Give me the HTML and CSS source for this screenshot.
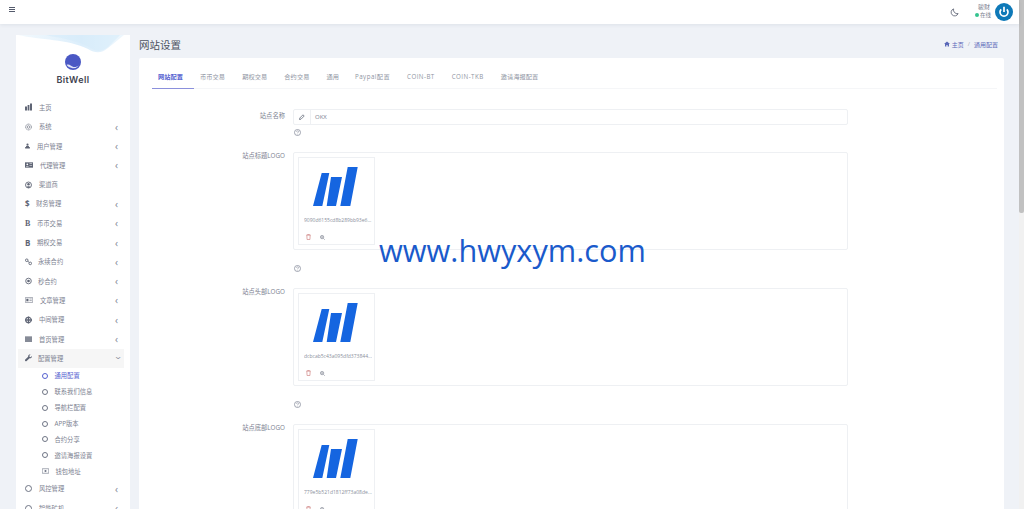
FILE: index.html
```html
<!DOCTYPE html>
<html lang="zh-CN">
<head>
    <meta charset="UTF-8">
    <title>网站设置</title>
    <link rel="stylesheet" href="styles.css">
</head>
<body>
    <svg class="defs" width="0" height="0">
        <defs>
            <linearGradient id="wave-a" x1="0" y1="0" x2="1" y2="0">
                <stop offset="0" stop-color="#f3f9fd"/>
                <stop offset=".6" stop-color="#dceefb"/>
                <stop offset="1" stop-color="#eef7fd"/>
            </linearGradient>
        </defs>
        <symbol id="i-chart" viewBox="0 0 7 7"><path d="M0 3h2v4H0zM2.6 1.500h1.800V7H2.600zM5 0h2v7H5z"/></symbol>
        <symbol id="i-gear" viewBox="0 0 8 8"><circle cx="4" cy="4" r="3.300" fill="none" stroke="currentColor" stroke-width=".8" stroke-dasharray="1.600 .5"/><circle cx="4" cy="4" r="1.500" fill="none" stroke="currentColor" stroke-width=".7"/></symbol>
        <symbol id="i-user" viewBox="0 0 7 7"><circle cx="3.500" cy="1.600" r="1.500"/><path d="M1.500 3.600h4v1.200h1.300V7H.2V4.800h1.300z"/></symbol>
        <symbol id="i-card" viewBox="0 0 9 6"><path d="M0 0h9v6H0z"/><circle cx="2.600" cy="2.200" r="1" fill="#fff"/><path d="M1.200 4.600h2.800V4H1.200zM5 1.400h3V2H5zM5 3h3v.6H5z" fill="#fff"/></symbol>
        <symbol id="i-account" viewBox="0 0 8 8"><circle cx="4" cy="4" r="3.400" fill="none" stroke="currentColor" stroke-width="1"/><circle cx="4" cy="3.100" r="1.400"/><path d="M1.800 6.200c.6-1.200 3.800-1.200 4.400 0L4 7.400z"/></symbol>
        <symbol id="i-link" viewBox="0 0 8 8"><circle cx="2" cy="2" r="1.500" fill="none" stroke="currentColor"/><circle cx="6" cy="5.600" r="1.500" fill="none" stroke="currentColor"/><path d="M3 3l2 1.600" stroke="currentColor"/></symbol>
        <symbol id="i-target" viewBox="0 0 8 8"><circle cx="4" cy="4" r="3.200" fill="none" stroke="currentColor"/><circle cx="4" cy="4" r="1.500"/></symbol>
        <symbol id="i-news" viewBox="0 0 9 6"><path d="M.3.3h8.400v5.400H.3z" fill="none" stroke="currentColor" stroke-width=".6"/><path d="M1.500 1.500h2.400v3H1.500zM5 1.500h2.600v.7H5zM5 3h2.600v.7H5z"/></symbol>
        <symbol id="i-buoy" viewBox="0 0 8 8"><circle cx="4" cy="4" r="3.200" fill="none" stroke="currentColor" stroke-width="1.200"/><path d="M3.200 0h1.600v8H3.200zM0 3.200h8v1.600H0z"/></symbol>
        <symbol id="i-rows" viewBox="0 0 8 6"><path d="M0 0h8v1.500H0zM0 2.250h8v1.500H0zM0 4.500h8V6H0z"/></symbol>
        <symbol id="i-wrench" viewBox="0 0 8 8"><path d="M7.800 1.600 6.400 3l-1.200-.3L4.900 1.500 6.300.2C5-.2 3.400.7 3.600 2.500L.3 5.800c-.5.5-.4 1.200 0 1.600.5.5 1.200.4 1.600 0L5.200 4.200c1.900.3 3-1.200 2.600-2.600z"/></symbol>
        <symbol id="i-wallet" viewBox="0 0 8 6"><path d="M.3.4h7.400v5.200H.3z" fill="none" stroke="currentColor" stroke-width=".7"/><circle cx="4" cy="3" r="1.200"/></symbol>
        <symbol id="i-help" viewBox="0 0 6 6"><circle cx="3" cy="3" r="2.600" fill="none" stroke="currentColor" stroke-width=".6"/><path d="M2.100 2.300c.1-1 1.800-1 1.800 0 0 .7-.9.6-.9 1.300M3 4.200v.5" fill="none" stroke="currentColor" stroke-width=".5"/></symbol>
        <symbol id="i-trash" viewBox="0 0 6 7"><path d="M.3 1.300h5.400M2 1.200V.4h2v.8M1 1.500l.3 5h3.400l.3-5" fill="none" stroke="currentColor" stroke-width=".7"/></symbol>
        <symbol id="i-zoom" viewBox="0 0 6 6"><circle cx="2.500" cy="2.500" r="2" fill="none" stroke="currentColor" stroke-width=".7"/><path d="M4 4l1.800 1.800M1.500 2.500h2M2.500 1.500v2" fill="none" stroke="currentColor" stroke-width=".6"/></symbol>
        <symbol id="i-logo" viewBox="0 0 45 39"><path d="M0 39h9.300L16.300 6H8.700zM13.700 39H23L29 10H18zM27.300 39h10L44.700 0h-10z"/></symbol>
    </svg>

    <div class="viewport">
        <header class="topbar">
            <div class="burger"><span></span><span></span><span></span></div>
            <div class="topbar-right">
                <svg class="moon" viewBox="0 0 10 10"><path d="M4 1a4 4 0 1 0 5 5.200A4.200 4.200 0 0 1 4 1z" fill="none" stroke="currentColor" stroke-width=".9"/></svg>
                <div class="user-info">
                    <div class="user-name">骏财</div>
                    <div class="user-status"><i class="dot"></i>在线</div>
                </div>
                <svg class="avatar" viewBox="0 0 18 18">
                    <circle cx="9" cy="9" r="9" fill="#0e79b8"/>
                    <path d="M6.200 6.300a4 4 0 1 0 5.600 0" fill="none" stroke="#fff" stroke-width="1.700"/>
                    <path d="M9 3.800v5.200" stroke="#fff" stroke-width="1.700"/>
                </svg>
            </div>
        </header>

        <div class="layout">
            <aside class="sidebar">
                <div class="brand">
                    <svg class="brand-wave" viewBox="0 0 114 18" preserveAspectRatio="none">
                        <path d="M2 0h106L92 13c-6 5-12 6-20 1C52 4 24 5 2 0z" fill="url(#wave-a)"/>
                        <path d="M30 0c18 4 32 5 46 14 6 3 11 2 16-2L104 0z" fill="#d6ebfa" opacity=".55"/>
                    </svg>
                    <svg class="brand-logo" viewBox="0 0 16 16">
                        <circle cx="8" cy="8" r="8" fill="#4a58c4"/>
                        <path d="M1.500 11c3-1.500 4 1.500 7 2 2 .3 4-.5 5.500-1.500A8 8 0 0 1 1.500 11z" fill="#dfe3f7"/>
                    </svg>
                    <div class="brand-name">BitWell</div>
                </div>
                <nav class="nav">
                    <a class="nav-link"><svg class="ico w7"><use href="#i-chart"/></svg>主页</a>
                    <a class="nav-link"><svg class="ico w7"><use href="#i-gear"/></svg>系统<span class="chev">‹</span></a>
                    <a class="nav-link"><svg class="ico w5"><use href="#i-user"/></svg>用户管理<span class="chev">‹</span></a>
                    <a class="nav-link"><svg class="ico w8"><use href="#i-card"/></svg>代理管理<span class="chev">‹</span></a>
                    <a class="nav-link"><svg class="ico w7"><use href="#i-account"/></svg>渠道商</a>
                    <a class="nav-link"><span class="ico-text w4">$</span>财务管理<span class="chev">‹</span></a>
                    <a class="nav-link"><span class="ico-text w5 serif">B</span>币币交易<span class="chev">‹</span></a>
                    <a class="nav-link"><span class="ico-text w5">B</span>期权交易<span class="chev">‹</span></a>
                    <a class="nav-link"><svg class="ico w7 tight"><use href="#i-link"/></svg>永续合约<span class="chev">‹</span></a>
                    <a class="nav-link"><svg class="ico w7 tight"><use href="#i-target"/></svg>秒合约<span class="chev">‹</span></a>
                    <a class="nav-link"><svg class="ico w8"><use href="#i-news"/></svg>文章管理<span class="chev">‹</span></a>
                    <a class="nav-link"><svg class="ico w7"><use href="#i-buoy"/></svg>中间管理<span class="chev">‹</span></a>
                    <a class="nav-link"><svg class="ico w7"><use href="#i-rows"/></svg>首页管理<span class="chev">‹</span></a>
                    <a class="nav-link open"><svg class="ico w7 tight"><use href="#i-wrench"/></svg>配置管理<span class="chev down">‹</span></a>
                    <div class="sub">
                        <a class="sub-link active"><i class="ring"></i>通用配置</a>
                        <a class="sub-link"><i class="ring"></i>联系我们信息</a>
                        <a class="sub-link"><i class="ring"></i>导航栏配置</a>
                        <a class="sub-link"><i class="ring"></i>APP版本</a>
                        <a class="sub-link"><i class="ring"></i>合约分享</a>
                        <a class="sub-link"><i class="ring"></i>邀请海报设置</a>
                        <a class="sub-link"><svg class="ring-ico"><use href="#i-wallet"/></svg>钱包地址</a>
                    </div>
                    <a class="nav-link"><i class="ring big"></i>风控管理<span class="chev">‹</span></a>
                    <a class="nav-link"><i class="ring big"></i>智能矿机<span class="chev">‹</span></a>
                </nav>
            </aside>

            <main class="content">
                <div class="page-head">
                    <h1>网站设置</h1>
                    <div class="crumbs">
                        <svg class="home" viewBox="0 0 6 6"><path d="M3 .4 0 3h1v2.600h1.400V4h1.200v1.600H5V3h1z"/></svg>
                        <span>主页</span><span class="sep">/</span><span>通用配置</span>
                    </div>
                </div>

                <section class="card">
                    <div class="tabs">
                        <a class="tab active">网站配置</a>
                        <a class="tab">币币交易</a>
                        <a class="tab">期权交易</a>
                        <a class="tab">合约交易</a>
                        <a class="tab short">通用</a>
                        <a class="tab wide">Paypal配置</a>
                        <a class="tab wide">COIN-BT</a>
                        <a class="tab wide">COIN-TKB</a>
                        <a class="tab">邀请海报配置</a>
                    </div>

                    <div class="form">
                        <div class="row">
                            <label>站点名称</label>
                            <div class="field">
                                <div class="input-group">
                                    <span class="addon"><svg viewBox="0 0 6 6"><path d="M.5 5.500l.3-1.500L4 .8l1.200 1.200L2 5.200z" fill="none" stroke="currentColor" stroke-width=".7"/></svg></span>
                                    <span class="input-value">OKX</span>
                                </div>
                                <svg class="help"><use href="#i-help"/></svg>
                            </div>
                        </div>

                        <div class="row">
                            <label class="upload-label">站点标题LOGO</label>
                            <div class="field">
                                <div class="upload">
                                    <div class="thumb">
                                        <svg class="thumb-img"><use href="#i-logo"/></svg>
                                        <div class="thumb-name">9090d6155cd8b289bb93e6...</div>
                                        <div class="thumb-actions">
                                            <svg class="trash"><use href="#i-trash"/></svg>
                                            <svg class="zoom"><use href="#i-zoom"/></svg>
                                        </div>
                                    </div>
                                </div>
                                <svg class="help after-upload"><use href="#i-help"/></svg>
                            </div>
                        </div>

                        <div class="row">
                            <label class="upload-label">站点头部LOGO</label>
                            <div class="field">
                                <div class="upload">
                                    <div class="thumb">
                                        <svg class="thumb-img"><use href="#i-logo"/></svg>
                                        <div class="thumb-name">dcbcab5c43a095dfd373844...</div>
                                        <div class="thumb-actions">
                                            <svg class="trash"><use href="#i-trash"/></svg>
                                            <svg class="zoom"><use href="#i-zoom"/></svg>
                                        </div>
                                    </div>
                                </div>
                                <svg class="help after-upload"><use href="#i-help"/></svg>
                            </div>
                        </div>

                        <div class="row">
                            <label class="upload-label">站点底部LOGO</label>
                            <div class="field">
                                <div class="upload">
                                    <div class="thumb">
                                        <svg class="thumb-img"><use href="#i-logo"/></svg>
                                        <div class="thumb-name">779e5b521d1812ff73a08de...</div>
                                        <div class="thumb-actions">
                                            <svg class="trash"><use href="#i-trash"/></svg>
                                            <svg class="zoom"><use href="#i-zoom"/></svg>
                                        </div>
                                    </div>
                                </div>
                            </div>
                        </div>
                    </div>
                </section>
            </main>
        </div>
    </div>

    <div class="scrollbar"><div class="scroll-thumb"></div></div>

    <div class="watermark">www.hwyxym.com</div>
</body>
</html>
```

FILE: styles.css
```css
* { box-sizing: border-box; }
html, body { height: 100%; }
body {
    margin: 0;
    display: flex;
    height: 509px;
    overflow: hidden;
    background: #eff2f7;
    font-family: "Open Sans", "Noto Sans CJK SC", sans-serif;
    font-size: 6.300px;
    color: #7c8190;
}
.defs { position: absolute; }
svg { fill: currentColor; display: block; }

.viewport { flex: 1; min-width: 0; display: flex; flex-direction: column; }

.scrollbar { width: 5px; background: #f1f1f1; }
.scroll-thumb { height: 213px; background: #c1c1c1; border-radius: 0 0 2px 2px; }

/* top bar */
.topbar {
    height: 24px;
    flex: none;
    background: #fff;
    box-shadow: 0 1px 4px rgba(18,38,63,0.08);
    display: flex;
    align-items: center;
    justify-content: space-between;
    padding: 0 6px 0 9px;
    position: relative;
}
.burger { width: 6px; margin-top: -5px; }
.burger span { display: block; height: 1px; background: #555b6d; margin-bottom: 1px; }
.topbar-right { display: flex; align-items: center; }
.moon { width: 9px; height: 9px; color: #555b6d; margin: 1px 16px 0 0; }
.user-info { text-align: right; margin-right: 4px; margin-top: -2px; line-height: 8.500px; font-size: 6px; }
.user-name { padding-right: 1px; }
.user-status { display: flex; align-items: center; font-size: 5.500px; }
.dot { width: 4px; height: 4px; border-radius: 50%; background: #34c38f; margin-right: 1px; }
.avatar { width: 18px; height: 18px; }

.layout { flex: 1; min-height: 0; display: flex; padding: 11px 15px 0 16px; gap: 9px; }

/* sidebar */
.sidebar { width: 114px; flex: none; background: #fff; }
.brand { height: 62.800px; position: relative; padding-top: 19px; text-align: center; }
.brand-wave { position: absolute; top: 0; left: 0; width: 114px; height: 18px; }
.brand-logo { width: 16px; height: 16px; margin: 0 auto; position: relative; }
.brand-name { margin-top: 4px; font-family: Inter, sans-serif; font-size: 9px; line-height: 12px; font-weight: 600; color: #3f4350; letter-spacing: .4px; }

.nav-link {
    height: 19.300px;
    display: flex;
    align-items: center;
    gap: 7px;
    margin: 0 6px 0 2px;
    padding: 0 6px 0 7px;
}
.nav-link.open { background: #f6f6f6; height: 18.500px; margin-bottom: .3px; margin-top: .5px; }
.ico { height: 8px; color: #5f6575; flex: none; }
.ico.tight { margin-right: -1px; }
.ico-text { height: 9px; line-height: 9px; font-size: 8px; font-weight: 700; color: #5f6575; flex: none; }
.ico-text.serif { font-family: "Liberation Serif", serif; }
.w4 { width: 4px; }
.w5 { width: 5px; }
.w6 { width: 6px; }
.w7 { width: 7px; }
.w8 { width: 8px; }
.chev { margin-left: auto; font-size: 10px; line-height: 8px; color: #7d8393; }
.chev.down { transform: rotate(-90deg); }
.ring { width: 6px; height: 6px; border: .7px solid #6f7585; border-radius: 50%; flex: none; }
.ring.big { width: 7px; height: 7px; }
.sub-link { height: 15.900px; display: flex; align-items: center; padding-left: 25.500px; gap: 7px; }
.sub-link.active { color: #5561d0; }
.sub-link.active .ring { border-color: #5561d0; }
.ring-ico { width: 7px; height: 6px; color: #6f7585; flex: none; }

/* content */
.content { flex: 1; min-width: 0; }
.page-head { height: 23px; display: flex; align-items: center; justify-content: space-between; padding-bottom: 5px; }
h1 { margin: 0; font-size: 10.500px; font-weight: 400; color: #4d5260; }
.crumbs { display: flex; align-items: center; font-size: 6px; color: #5a68b8; margin-right: 6px; }
.home { width: 6px; height: 6px; margin-right: 2px; }
.sep { color: #a6abb7; margin: 0 4px; }

.card { background: #fff; border-radius: 2px; padding: 0 7px 0 13px; height: 470px; }
.tabs { display: flex; height: 31px; border-bottom: 1px solid #f5f6f8; }
.tab { padding: 0 6px; margin-right: 5px; line-height: 37px; height: 31px; font-size: 6.200px; color: #8f95a3; letter-spacing: .1px; white-space: nowrap; }
.tab.active { color: #5561d0; font-weight: 600; border-bottom: 1px solid #8b90dc; width: 42px; margin-right: 0; }
.tab.short { margin-right: 4px; }
.tab.wide { letter-spacing: .45px; }

.form { padding-top: 20px; }
.row { display: flex; margin-bottom: 16px; }
.row label { width: 133px; flex: none; text-align: right; line-height: 13px; }
.row .upload-label { line-height: 8px; }
.field { margin-left: 8px; width: 555px; flex: none; }
.input-group { display: flex; height: 16px; border: 1px solid #eef0f3; border-radius: 2px; }
.addon { width: 17px; border-right: 1px solid #eef0f3; display: flex; align-items: center; justify-content: center; color: #555b6d; }
.addon svg { width: 6px; height: 6px; }
.input-value { padding-left: 4px; line-height: 15px; font-size: 6px; color: #7d8393; }
.help { width: 7px; height: 7px; margin: 4px 0 0 1px; color: #7d8393; }
.help.after-upload { margin-top: 15px; }

.upload { height: 98px; border: 1px solid #eef0f3; border-radius: 2px; padding: 4px; }
.thumb { width: 77px; height: 88px; border: 1px solid #eef0f3; position: relative; padding: 9px 0 0 14px; }
.thumb-img { width: 45px; height: 39px; color: #1565e0; }
.thumb-name { margin: 10px 0 0 -9px; width: 68px; font-size: 5px; line-height: 8px; color: #8a8f9c; white-space: nowrap; overflow: hidden; }
.thumb-actions { display: flex; gap: 9px; margin: 10px 0 0 -7px; align-items: center; }
.trash { width: 5px; height: 6px; color: #c8706e; }
.zoom { width: 5px; height: 5px; color: #6f7585; }

/* site address laid over the page */
.watermark {
    position: absolute;
    left: 379px;
    top: 230px;
    font-family: "Open Sans", sans-serif;
    font-size: 30.700px;
    line-height: 41px;
    color: #1a5acb;
    white-space: nowrap;
}
```
